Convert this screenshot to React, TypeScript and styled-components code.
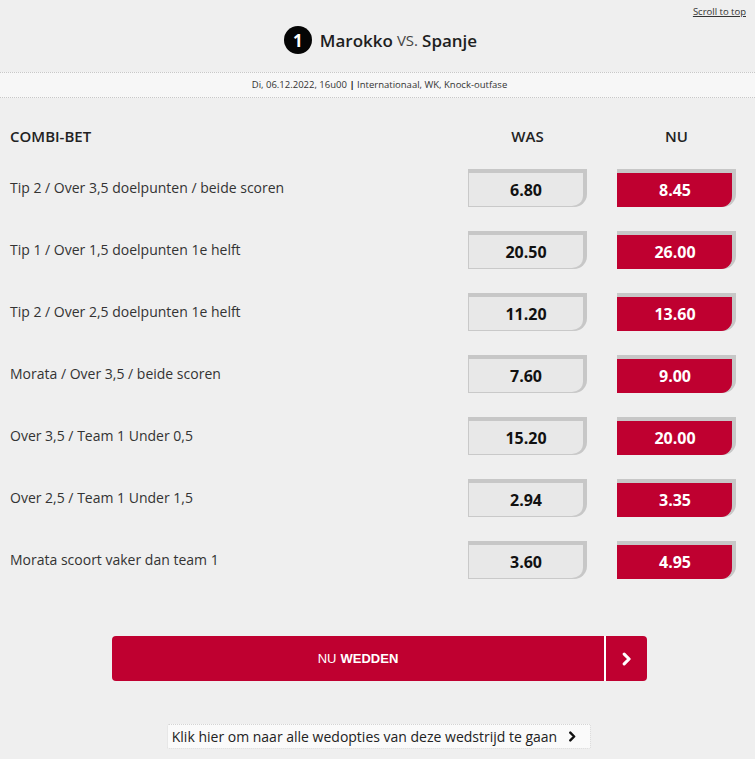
import { FunctionComponent } from "react";
import styled, { createGlobalStyle } from "styled-components";

const GlobalStyle = createGlobalStyle`
  html, body {
    margin: 0;
    padding: 0;
    background: #efefef;
  }
  body {
    font-family: "Open Sans", "Liberation Sans", sans-serif;
    color: #222;
  }
`;

const bets = [
  { label: "Tip 2 / Over 3,5 doelpunten / beide scoren", was: "6.80", nu: "8.45" },
  { label: "Tip 1 / Over 1,5 doelpunten 1e helft", was: "20.50", nu: "26.00" },
  { label: "Tip 2 / Over 2,5 doelpunten 1e helft", was: "11.20", nu: "13.60" },
  { label: "Morata / Over 3,5 / beide scoren", was: "7.60", nu: "9.00" },
  { label: "Over 3,5 / Team 1 Under 0,5", was: "15.20", nu: "20.00" },
  { label: "Over 2,5 / Team 1 Under 1,5", was: "2.94", nu: "3.35" },
  { label: "Morata scoort vaker dan team 1", was: "3.60", nu: "4.95" },
];

const Chevron: FunctionComponent<{ size: number; color: string }> = ({ size, color }) => (
  <svg width={size} height={size} viewBox="0 0 10 10">
    <path d="M3 1.5 L6.5 5 L3 8.5" fill="none" stroke={color} strokeWidth="2.2" strokeLinecap="round" strokeLinejoin="round" />
  </svg>
);

const App: FunctionComponent = () => {
  return (
    <Page>
      <GlobalStyle />
      <TopBar>
        <ScrollTop href="#">Scroll to top</ScrollTop>
      </TopBar>
      <Title>
        <Badge>1</Badge>
        <strong>Marokko</strong>
        <Vs>VS.</Vs>
        <strong>Spanje</strong>
      </Title>
      <Meta>
        Di, 06.12.2022, 16u00 <b>|</b> Internationaal, WK, Knock-outfase
      </Meta>
      <Table>
        <HeadRow>
          <HeadLabel>COMBI-BET</HeadLabel>
          <HeadCol>WAS</HeadCol>
          <HeadCol>NU</HeadCol>
        </HeadRow>
        {bets.map((bet) => (
          <BetRow key={bet.label}>
            <BetLabel>{bet.label}</BetLabel>
            <OddCell>
              <OddShadow>
                <OddFace>{bet.was}</OddFace>
              </OddShadow>
            </OddCell>
            <OddCell>
              <OddShadow>
                <OddFace $active>{bet.nu}</OddFace>
              </OddShadow>
            </OddCell>
          </BetRow>
        ))}
      </Table>
      <ButtonWrap>
        <BetButton>
          <BetButtonText>
            NU <b>WEDDEN</b>
          </BetButtonText>
          <BetButtonArrow>
            <Chevron size={14} color="#fff" />
          </BetButtonArrow>
        </BetButton>
      </ButtonWrap>
      <LinkWrap>
        <AllOptions>
          Klik hier om naar alle wedopties van deze wedstrijd te gaan
          <Chevron size={11} color="#111" />
        </AllOptions>
      </LinkWrap>
    </Page>
  );
};
export default App;

const Page = styled.div`
  width: 755px;
  height: 759px;
  overflow: hidden;
  background: #efefef;
`;

const TopBar = styled.div`
  display: flex;
  justify-content: flex-end;
  padding: 5px 9px 0 0;
  height: 14px;
`;

const ScrollTop = styled.a`
  font-size: 9.5px;
  color: #333;
  text-decoration: underline;
`;

const Title = styled.h1`
  margin: 0;
  display: flex;
  align-items: center;
  justify-content: center;
  gap: 6px;
  height: 42px;
  padding: 0 0 11px 6px;
  font-size: 17px;
  font-weight: 400;
  color: #1e1e1e;
  strong {
    font-weight: 600;
  }
`;

const Badge = styled.span`
  width: 28px;
  height: 28px;
  border-radius: 50%;
  background: #050505;
  color: #fff;
  display: flex;
  align-items: center;
  justify-content: center;
  font-size: 17px;
  font-weight: 700;
  margin-right: 2px;
`;

const Vs = styled.span`
  font-size: 15px;
  color: #444;
  margin: 0 -2px;
`;

const Meta = styled.div`
  height: 24px;
  line-height: 24px;
  background: #f7f7f7;
  border-top: 1px dotted #c8c8c8;
  border-bottom: 1px dotted #c8c8c8;
  text-align: center;
  font-size: 9.5px;
  color: #333;
  padding-left: 4px;
  b {
    font-weight: 700;
    color: #111;
  }
`;

const Table = styled.div`
  padding: 27px 0 0 0;
`;

const grid = `
  display: grid;
  grid-template-columns: 1fr 149px 149px;
  padding: 0 4px 0 10px;
`;

const HeadRow = styled.div`
  ${grid}
  align-items: center;
  height: 22px;
  margin-bottom: 22px;
  font-size: 15px;
  font-weight: 600;
  color: #222;
`;

const HeadLabel = styled.div``;

const HeadCol = styled.div`
  text-align: center;
`;

const BetRow = styled.div`
  ${grid}
  height: 62px;
  align-items: start;
`;

const BetLabel = styled.div`
  font-size: 14px;
  color: #333;
  padding-top: 9px;
`;

const OddCell = styled.div`
  display: flex;
  justify-content: center;
`;

const OddShadow = styled.div`
  width: 119px;
  height: 38px;
  box-sizing: border-box;
  padding: 4px 4px 0 0;
  background: #c7c7c7;
  border-bottom-right-radius: 13px;
`;

const OddFace = styled.div<{ $active?: boolean }>`
  height: 100%;
  box-sizing: border-box;
  display: flex;
  align-items: center;
  justify-content: center;
  background: ${(p) => (p.$active ? "#bf0030" : "#e8e8e8")};
  color: ${(p) => (p.$active ? "#fff" : "#111")};
  border-left: 1px solid ${(p) => (p.$active ? "#bf0030" : "#c9c9c9")};
  border-bottom: 1px solid ${(p) => (p.$active ? "#bf0030" : "#c9c9c9")};
  border-bottom-right-radius: 11px;
  font-size: 16px;
  font-weight: 700;
`;

const ButtonWrap = styled.div`
  display: flex;
  justify-content: center;
  padding: 33px 0 0 0;
`;

const BetButton = styled.button`
  width: 535px;
  height: 45px;
  margin-left: 4px;
  display: flex;
  padding: 0;
  border: none;
  border-radius: 4px;
  background: #bf0030;
  overflow: hidden;
  cursor: pointer;
  font-family: "Liberation Sans", Arial, sans-serif;
`;

const BetButtonText = styled.span`
  flex: 1;
  display: flex;
  align-items: center;
  justify-content: center;
  gap: 4px;
  color: #fff;
  font-size: 13px;
  b {
    font-weight: 700;
  }
`;

const BetButtonArrow = styled.span`
  width: 41px;
  display: flex;
  align-items: center;
  justify-content: center;
  border-left: 2px solid #fff;
`;

const LinkWrap = styled.div`
  display: flex;
  justify-content: center;
  padding-top: 43px;
`;

const AllOptions = styled.a`
  display: flex;
  align-items: center;
  gap: 10px;
  height: 23px;
  padding: 0 12px 0 4px;
  margin-left: 3px;
  background: #fafafa;
  border: 1px dotted #d4d4d4;
  border-radius: 2px;
  font-size: 14px;
  color: #222;
  cursor: pointer;
`;
